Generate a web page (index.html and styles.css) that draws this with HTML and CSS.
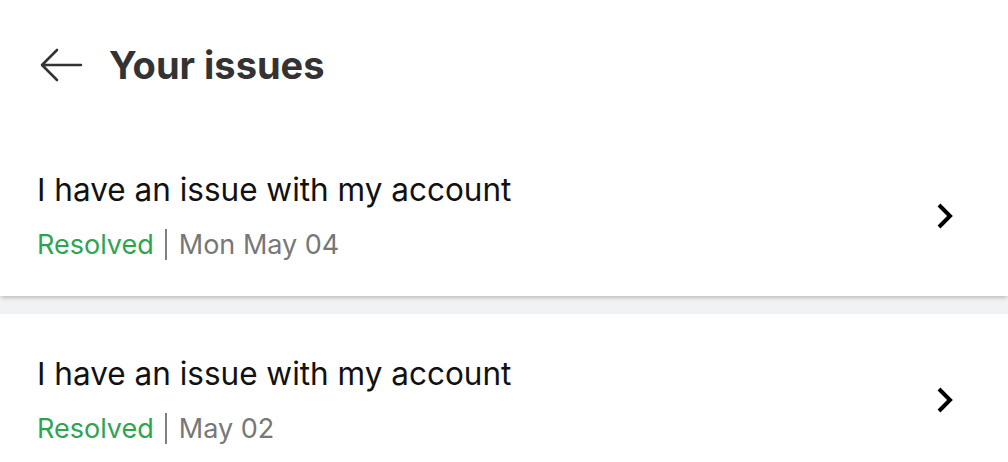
FILE: index.html
```html
<!DOCTYPE html>
<html>
<head>
<meta charset="utf-8">
<link rel="stylesheet" href="styles.css">
</head>
<body>
<div class="page">
  <header class="header">
    <svg class="back" width="44" height="36" viewBox="0 0 44 36" fill="none" stroke="#333" stroke-width="2.6" stroke-linecap="round" stroke-linejoin="round">
      <path d="M41 18H3M17 3L2 18l15 15"/>
    </svg>
    <h1 class="title">Your issues</h1>
  </header>
  <div class="list">
    <div class="card">
      <div class="info">
        <div class="subject">I have an issue with my account</div>
        <div class="meta"><span class="status">Resolved</span><span class="sep"></span><span class="date">Mon May 04</span></div>
      </div>
      <svg class="chev" width="18" height="26" viewBox="0 0 18 26" fill="none" stroke="#000" stroke-width="4">
        <path d="M3 2l11 11L3 24"/>
      </svg>
    </div>
    <div class="gap"></div>
    <div class="card">
      <div class="info">
        <div class="subject">I have an issue with my account</div>
        <div class="meta"><span class="status">Resolved</span><span class="sep"></span><span class="date">May 02</span></div>
      </div>
      <svg class="chev" width="18" height="26" viewBox="0 0 18 26" fill="none" stroke="#000" stroke-width="4">
        <path d="M3 2l11 11L3 24"/>
      </svg>
    </div>
  </div>
</div>
</body>
</html>
```

FILE: styles.css
```css
* { box-sizing: border-box; }
html, body { margin: 0; padding: 0; background: #fff; }
body { font-family: Inter, "Noto Sans", sans-serif; width: 1008px; height: 462px; overflow: hidden; }
.header { display: flex; align-items: center; height: 130px; padding-left: 40px; gap: 25px; }
.back { display: block; }
.title { margin: 0; font-size: 38px; font-weight: 700; color: #333; }
.card { display: flex; align-items: center; justify-content: space-between; background: #fff; padding: 6px 54px 0 37px; height: 166px; position: relative; }
.list > .card:first-child { box-shadow: 0 3px 4px -1px rgba(0,0,0,0.22); z-index: 1; }
.gap { height: 18px; background: #f1f2f4; }
.info { display: flex; flex-direction: column; gap: 21px; }
.subject { font-size: 31.5px; color: #111; line-height: 36px; }
.meta { display: flex; align-items: center; font-size: 27px; line-height: 32px; }
.status { color: #2ea44f; }
.sep { width: 2px; height: 31px; background: #808080; margin: 0 12px 0 11px; }
.date { color: #777; }
```
